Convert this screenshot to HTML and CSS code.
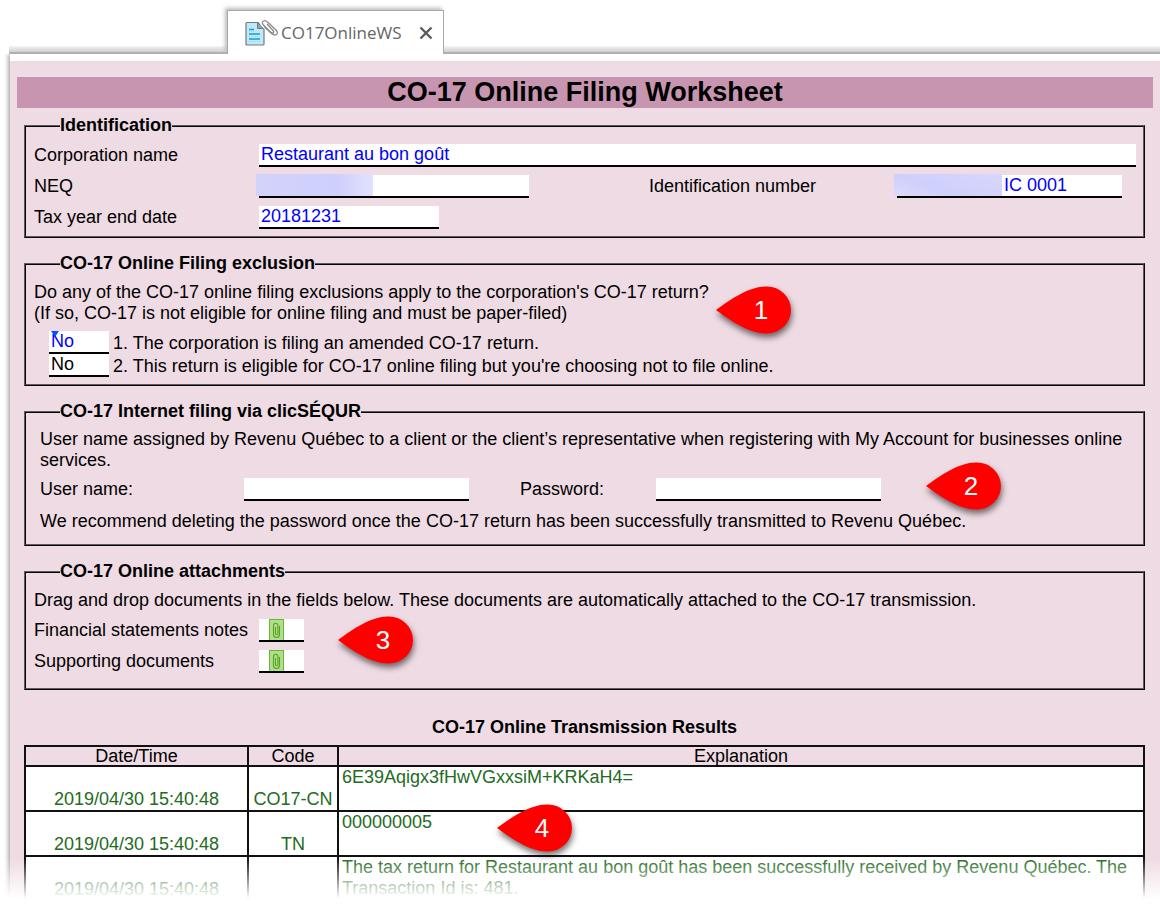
FILE: index.html
```html
<!DOCTYPE html>
<html lang="en">
<head>
<meta charset="utf-8">
<title>CO-17 Online Filing Worksheet</title>
<link rel="stylesheet" href="styles.css">
</head>
<body>
<svg class="defs" aria-hidden="true">
  <symbol id="pin" viewBox="0 0 76 48"><path d="M0 24 C15 13 34 0 51 0.500 A24 23.500 0 0 1 51 47.500 C34 48 15 35 0 24Z" fill="#f00"/></symbol>
  <symbol id="clip" viewBox="0 0 15 21"><rect x="0.500" y="0.500" width="14" height="22" fill="#b2dd8c" stroke="#69b82e"/><path d="M10.500 7v8.500a3 3 0 0 1-6 0V6.500a2.200 2.200 0 0 1 4.400 0v8a1.200 1.200 0 0 1-2.400 0V8" fill="none" stroke="#55a51c" stroke-width="1.100"/></symbol>
</svg>
<header class="tabs">
  <div class="shelf shelf-left"></div>
  <div class="tab">
    <svg class="tab-icon" width="34" height="28" viewBox="0 0 34 28" aria-hidden="true">
      <path d="M2 3.500h11l6 6V25q0 1-1 1H2q-1 0-1-1V4.500q0-1 1-1z" fill="#c0e9f8" stroke="#707a80" stroke-width="1.200"/>
      <path d="M12.500 3.500v6h6z" fill="#8aa4b0" stroke="#707a80"/>
      <path d="M4 10.500h5M4 15h11M4 20h11" stroke="#169bd7" stroke-width="1.500"/>
      <path d="M4 12.500h5M4 17.500h11M4 22.500h11" stroke="#8fd0ec" stroke-width="0.800" stroke-dasharray="1 1"/>
      <path d="M22 5l6 6.500q2 3-.5 3.500-1.500 0-3-2L17 5.500q-2-3 .5-4 2.500-1 4.500 1l9 8.500q3 3 1 5-2.500 2-5.500-.5L19 7.500" fill="none" stroke="#fff" stroke-width="3"/>
      <path d="M22 5l6 6.500q1.500 2-.2 2.600-1.300 0-2.800-1.600L18 5.500q-1.500-2.500.5-3.500 2-1 4 1l8.500 8q2.500 3 .5 4.500-2 1.500-5-1L19 7.500" fill="none" stroke="#8a8a8a" stroke-width="1.300"/>
    </svg>
    <span class="tab-name">CO17OnlineWS</span>
    <button class="close" type="button" aria-label="Close">
      <svg width="14" height="14" viewBox="0 0 14 14"><path d="M1.500 1.500l11 11M12.500 1.500l-11 11" stroke="#5d5a5b" stroke-width="2.400"/></svg>
    </button>
  </div>
  <div class="shelf shelf-right"></div>
</header>
<main class="sheet">
  <h1>CO-17 Online Filing Worksheet</h1>

  <section class="block">
    <fieldset>
      <legend>Identification</legend>
      <div class="row">
        <label class="name" for="corp">Corporation name</label>
        <input class="grow" id="corp" value="Restaurant au bon goût">
      </div>
      <div class="row">
        <label class="name" for="neq">NEQ</label>
        <span class="masked neq"><input id="neq"><span class="mask"></span></span>
        <label class="idlabel" for="idno">Identification number</label>
        <span class="masked idno"><input id="idno" value="IC 0001"><span class="mask"></span></span>
      </div>
      <div class="row">
        <label class="name" for="year">Tax year end date</label>
        <input class="year" id="year" value="20181231">
      </div>
    </fieldset>
  </section>

  <section class="block">
    <fieldset>
      <legend>CO-17 Online Filing exclusion</legend>
      <p>Do any of the CO-17 online filing exclusions apply to the corporation's CO-17 return?<br>(If so, CO-17 is not eligible for online filing and must be paper-filed)</p>
      <div class="answers">
        <div class="answer flagged"><input id="ex1" value="No"><label for="ex1">1. The corporation is filing an amended CO-17 return.</label></div>
        <div class="answer"><input class="plain" id="ex2" value="No"><label for="ex2">2. This return is eligible for CO-17 online filing but you're choosing not to file online.</label></div>
      </div>
    </fieldset>
    <div class="pin pin-1"><svg><use href="#pin"/></svg><span>1</span></div>
  </section>

  <section class="block">
    <fieldset class="login">
      <legend>CO-17 Internet filing via clicSÉQUR</legend>
      <p>User name assigned by Revenu Québec to a client or the client’s representative when registering with My Account for businesses online services.</p>
      <div class="row">
        <label class="user" for="user">User name:</label><input class="cred" id="user">
        <label class="pass" for="pass">Password:</label><input class="cred" id="pass" type="password">
      </div>
      <p>We recommend deleting the password once the CO-17 return has been successfully transmitted to Revenu Québec.</p>
    </fieldset>
    <div class="pin pin-2"><svg><use href="#pin"/></svg><span>2</span></div>
  </section>

  <section class="block">
    <fieldset class="attach">
      <legend>CO-17 Online attachments</legend>
      <p>Drag and drop documents in the fields below. These documents are automatically attached to the CO-17 transmission.</p>
      <div class="row">
        <label class="name" for="notes">Financial statements notes</label>
        <button class="drop" id="notes" type="button"><svg width="15" height="21"><use href="#clip"/></svg></button>
      </div>
      <div class="row">
        <label class="name" for="docs">Supporting documents</label>
        <button class="drop" id="docs" type="button"><svg width="15" height="21"><use href="#clip"/></svg></button>
      </div>
    </fieldset>
    <div class="pin pin-3"><svg><use href="#pin"/></svg><span>3</span></div>
  </section>

  <section class="block results">
    <h2>CO-17 Online Transmission Results</h2>
    <table>
      <thead><tr><th class="date">Date/Time</th><th class="code">Code</th><th>Explanation</th></tr></thead>
      <tbody>
        <tr><td>2019/04/30 15:40:48</td><td>CO17-CN</td><td class="text">6E39Aqigx3fHwVGxxsiM+KRKaH4=</td></tr>
        <tr><td>2019/04/30 15:40:48</td><td>TN</td><td class="text">000000005</td></tr>
        <tr><td>2019/04/30 15:40:48</td><td></td><td class="text">The tax return for Restaurant au bon goût has been successfully received by Revenu Québec. The Transaction Id is: 481.</td></tr>
      </tbody>
    </table>
    <div class="pin pin-4"><svg><use href="#pin"/></svg><span>4</span></div>
  </section>
  <div class="fade"></div>
</main>
</body>
</html>
```
FILE: styles.css
```css
* { box-sizing: border-box; }
body {
  margin: 0;
  background: #fff;
  color: #000;
  font: 18px/21px "Liberation Sans", Arial, sans-serif;
}
h1, h2, p { margin: 0; }
input, button { font: inherit; border-radius: 0; }
.defs { position: absolute; width: 0; height: 0; }

.tabs { display: flex; align-items: flex-end; padding: 10px 0 0 9px; }
.shelf {
  height: 8px;
  border-bottom: 2px solid #b0b0b0;
  background: linear-gradient(#f4f4f4, #cfcfcf);
}
.shelf-left { width: 218px; }
.shelf-right { flex: 1; }
.tab {
  display: flex;
  align-items: center;
  width: 217px;
  height: 44px;
  padding: 0 10px 0 17px;
  background: #fff;
  border: 1px solid #aaa;
  border-width: 1px 1px 0 1px;
  box-shadow: -2px -2px 4px #bbb;
  clip-path: inset(-8px 0 0 -8px);
}
.tab-name {
  flex: 1;
  margin-left: 2px;
  color: #666;
  font: 17px/22px "Open Sans", "Noto Sans", sans-serif;
}
.close { display: flex; padding: 0; background: none; border: 0; }

.sheet {
  position: relative;
  margin-left: 10px;
  padding: 16px 7px 0;
  border-top: 7px solid #fff;
  background: #efdbe3;
  box-shadow: -2px 0 4px #aaa;
  clip-path: inset(0 0 0 -8px);
}
h1 {
  height: 31px;
  background: #c795b0;
  font-size: 27px;
  line-height: 30px;
  text-align: center;
}
.block { position: relative; margin: 0 8px 16px 7px; }
h1 + .block { margin-top: 8px; }
fieldset {
  margin: 0;
  padding: 8px 7px 7px 8px;
  border: 2px ridge #5c5c5c;
}
legend {
  margin-left: 26px;
  padding: 0 0 2px;
  font-weight: bold;
  line-height: 18px;
}

input, .drop {
  height: 23px;
  padding: 0 2px;
  border: 0;
  border-bottom: 2px solid #000;
  background: #fff;
  color: #00f;
}
.row { display: flex; align-items: center; height: 23px; }
.row + .row { margin-top: 8px; }
.name { width: 225px; }
.grow { flex: 1; }
.year { width: 180px; }
.idlabel { width: 248px; margin-left: 120px; }
.masked { position: relative; display: flex; }
.masked input { width: 100%; }
.neq { width: 270px; }
.idno { width: 225px; }
.idno input { padding-left: 107px; }
.mask {
  position: absolute;
  top: -1px;
  left: -3px;
  width: 108px;
  height: 22px;
  background: linear-gradient(20deg, #dcdcfa, #cfcffd 35%, #d6d6fd);
}
.neq .mask { width: 117px; background: linear-gradient(90deg, #d2d2fb, #cfcffd 70%, #e2e2fd); }

.answers { margin: 7px 0 0 15px; }
.answer { position: relative; display: flex; align-items: flex-end; gap: 4px; }
.answer input { width: 60px; }
.answer .plain { color: #000; }
.flagged::before {
  content: "";
  position: absolute;
  top: 0;
  left: 2px;
  border: 4px solid transparent;
  border-top: 6px solid #0055ff;
  border-bottom: 0;
}

.login { padding: 7px 7px 12px 14px; }
.login legend { margin-left: 20px; }
.login .row { margin: 7px 0 10px; }
.user { width: 204px; }
.cred { width: 225px; }
.pass { width: 136px; margin-left: 51px; }

.attach { padding-bottom: 15px; }
.attach p { margin-bottom: 8px; }
.drop { display: flex; width: 45px; padding: 0 10px; }

.pin { position: absolute; width: 76px; height: 48px; }
.pin svg {
  display: block;
  width: 100%;
  height: 100%;
  overflow: visible;
  filter: drop-shadow(1px 4px 3px rgba(0, 0, 0, 0.55));
}
.pin span {
  position: absolute;
  inset: 0 0 0 14px;
  color: #fff;
  font-size: 26px;
  line-height: 48px;
  text-align: center;
}
.pin-1 { top: 32px; left: 692px; }
.pin-2 { top: 60px; left: 902px; }
.pin-3 { top: 54px; left: 314px; }
.pin-4 { top: 87px; left: 473px; }

.results { margin-top: 27px; margin-bottom: 0; }
h2 { margin-bottom: 8px; font-size: 18px; line-height: 20px; text-align: center; }
table { width: 100%; border-collapse: collapse; table-layout: fixed; }
th, td { padding: 0; border: 2px solid #111; text-align: center; }
th { height: 20px; font-weight: normal; line-height: 18px; }
td { height: 45px; background: #fff; color: #226b22; vertical-align: bottom; }
.date { width: 223px; }
.code { width: 90px; }
td.text { padding: 0 3px; text-align: left; vertical-align: top; }
.fade {
  position: absolute;
  right: 0;
  bottom: 0;
  left: -8px;
  height: 44px;
  background: linear-gradient(rgba(255, 255, 255, 0), #fff 92%);
}
```
